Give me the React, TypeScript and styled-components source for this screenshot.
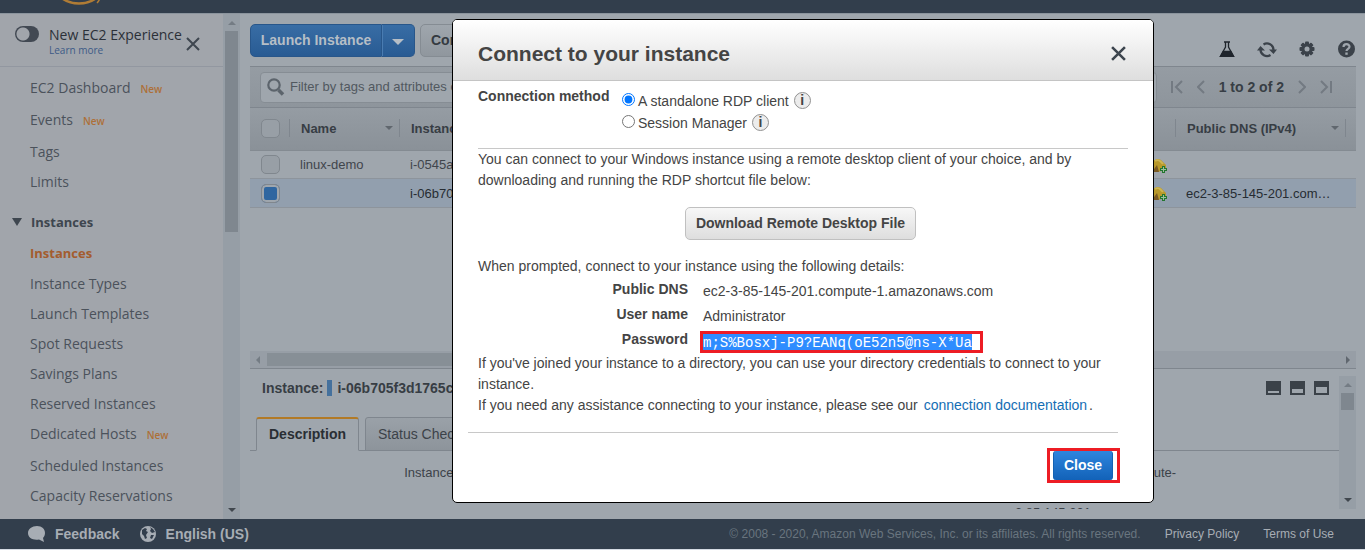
import React from 'react';
import styled, { createGlobalStyle } from 'styled-components';

const Global = createGlobalStyle`
  * { box-sizing: border-box; }
  body { margin: 0; background: #fff; overflow: hidden; font-family: "Liberation Sans", Arial, sans-serif; font-size: 14px; color: #444; }
  button, input { font-family: inherit; font-size: inherit; }
  h1, h2, p, ul, dl, dd, fieldset { margin: 0; padding: 0; border: 0; }
  a { text-decoration: none; color: inherit; }
`;

const Page = styled.div`
  min-height: 100vh;
  display: grid;
  grid-template-rows: 13px 1fr 30px 6px;
`;
const TopBar = styled.header`
  background: #323e4c;
  padding-left: 61px;
  overflow: hidden;
  svg { display: block; }
`;
const Middle = styled.div`
  display: flex;
  min-height: 0;
  border-top: 1px solid #8b949d;
`;

/* Side navigation */
const Side = styled.nav`
  flex: none;
  display: flex;
  width: 240px;
  background: #a1a5ab;
  font-family: "Open Sans", sans-serif;
`;
const SideBody = styled.div`
  flex: 1;
`;
const Experience = styled.div`
  display: flex;
  height: 53px;
  padding: 12px 23px 0 15px;
  border-bottom: 1px solid #9297a0;
`;
const Switch = styled.input`
  appearance: none;
  flex: none;
  width: 24px;
  height: 16px;
  margin: 0 10px 0 0;
  border-radius: 8px;
  background: radial-gradient(circle at 8px 8px, #a1a5ab 6px, #424953 7px);
`;
const ExperienceText = styled.div`
  flex: 1;
  display: flex;
  flex-direction: column;
  white-space: nowrap;
  label { font-size: 14px; line-height: 17px; color: #2b3038; }
  a { font-size: 10px; line-height: 15px; color: #3d5a87; }
`;
const IconButton = styled.button`
  display: flex;
  padding: 0;
  border: 0;
  background: none;
  color: #3e464f;
`;
const SideClose = styled(IconButton)`
  height: 14px;
  margin-top: 11px;
`;
const SideList = styled.ul`
  list-style: none;
  padding: ${(p: { $first?: boolean }) => (p.$first ? '5px 0 11px' : '0')};
`;
const SideItem = styled.li<{ $tagged?: boolean; $active?: boolean }>`
  display: flex;
  align-items: center;
  gap: 10px;
  height: ${(p) => (p.$tagged ? 32 : 30)}px;
  padding: 0 0 ${(p) => (p.$tagged ? 2 : 0)}px 30px;
  font-size: ${(p) => (p.$active ? 13 : 14)}px;
  font-weight: ${(p) => (p.$active ? 700 : 400)};
  color: ${(p) => (p.$active ? '#a35c2e' : '#4b525b')};
`;
const NewTag = styled.small`
  margin-top: 3px;
  font-size: 10px;
  font-weight: 600;
  color: #ad7039;
`;
const Group = styled.button`
  display: flex;
  align-items: center;
  gap: 9px;
  height: 31px;
  padding: 0 0 2px 12px;
  border: 0;
  background: none;
  font-size: 13px;
  font-weight: 700;
  color: #3e464f;
`;

/* Scroll bars */
const VTrack = styled.div<{ $thumb: number }>`
  flex: none;
  display: flex;
  flex-direction: column;
  align-items: center;
  justify-content: space-between;
  width: 17px;
  padding: 7px 0;
  background: #969ea6;
  &::before { content: ''; border: 4px solid transparent; border-top: 0; border-bottom-color: #747c84; }
  &::after { content: ''; border: 4px solid transparent; border-bottom: 0; border-top-color: #40474e; }
  i { width: 13px; height: ${(p) => p.$thumb}px; margin: 6px 0 auto; background: #7f878f; }
`;
const HTrack = styled.div`
  display: flex;
  align-items: center;
  justify-content: space-between;
  height: 18px;
  padding: 0 6px;
  background: #979ea6;
  border-bottom: 1px solid #7f868e;
  &::before { content: ''; border: 4px solid transparent; border-left: 0; border-right-color: #747c84; }
  &::after { content: ''; border: 4px solid transparent; border-right: 0; border-left-color: #60676f; }
  i { width: 72%; height: 13px; margin: 0 auto 0 7px; background: #878f96; }
`;

/* Main area */
const Main = styled.main`
  flex: 1;
  min-width: 0;
  display: flex;
  flex-direction: column;
  padding: 0 9px 10px 10px;
  background: #9fa6ad;
`;
const Toolbar = styled.div`
  display: flex;
  align-items: flex-start;
  gap: 5px;
  height: 52px;
  padding-top: 10px;
`;
const Split = styled.div`
  display: flex;
  button {
    height: 33px;
    border: 1px solid #28568a;
    background: linear-gradient(#386da5, #295b93);
    color: #b6bec6;
    font-weight: 700;
  }
  button:first-child { width: 132px; padding: 0 0 2px; border-radius: 5px 0 0 5px; }
  button:last-child { width: 33px; padding: 0; border-left: 0; border-radius: 0 5px 5px 0; box-shadow: inset 1px 0 #4a7cb1; }
`;
const Caret = styled.i`
  display: inline-block;
  border: 6px solid transparent;
  border-bottom: 0;
  border-top-color: #b6bec6;
  vertical-align: middle;
`;
const GreyButton = styled.button`
  height: 33px;
  padding: 0 10px 2px;
  border: 1px solid #858c93;
  border-radius: 5px;
  background: linear-gradient(#9fa6ad, #90979e);
  font-weight: 700;
  color: #343a41;
`;
const Tools = styled.div`
  display: flex;
  align-items: center;
  gap: 21px;
  margin-left: auto;
  padding-top: 15px;
  svg { display: block; }
`;
const FilterBar = styled.div`
  display: flex;
  align-items: center;
  height: 42px;
  padding: 0 24px 0 10px;
  background: linear-gradient(#959ca3, #8e959c);
  border: solid #7f868e;
  border-width: 1px 0;
`;
const Search = styled.label`
  flex: 1;
  display: flex;
  align-items: center;
  gap: 5px;
  height: 31px;
  padding: 0 0 1px 6px;
  border: 1px solid #868d94;
  border-radius: 4px;
  background: #9fa6ad;
  color: #5c646c;
  input { flex: 1; border: 0; padding: 0; background: none; outline: 0; font-size: 13px; }
  input::placeholder { color: #51585f; }
`;
const Pager = styled.div`
  display: flex;
  align-items: center;
  gap: 14px;
  padding-left: 14px;
  font-weight: 700;
  color: #373e45;
  button { color: #737a82; }
`;
const Grid = styled.table`
  width: 100%;
  table-layout: fixed;
  border-collapse: separate;
  border-spacing: 0;
  font-size: 13px;
  color: #3f454c;
  th { height: 43px; padding: 0 0 2px; text-align: left; background: linear-gradient(#959ca3, #8a9198); border-bottom: 1px solid #848b92; color: #373d44; }
  td { padding: 0 0 0 10px; white-space: nowrap; border-bottom: 1px solid #8d949c; }
  td:first-child { padding-left: 11px; }
  td svg { display: block; margin: 2px 9px 0 auto; }
`;
const Head = styled.div`
  display: flex;
  align-items: center;
  justify-content: space-between;
  height: 18px;
  padding: 0 6px 0 11px;
  border-right: 1px solid #7f868e;
`;
const SortCaret = styled.i`
  border: 4px solid transparent;
  border-bottom: 0;
  border-top-color: #60676e;
`;
const Row = styled.tr<{ $selected?: boolean }>`
  height: ${(p) => (p.$selected ? 29 : 28)}px;
  background: ${(p) => (p.$selected ? '#929fae' : 'transparent')};
  color: ${(p) => (p.$selected ? '#262c32' : '#3f454c')};
`;
const Tick = styled.input`
  appearance: none;
  display: block;
  width: 19px;
  height: 19px;
  margin: 0;
  border: 1px solid #80878e;
  border-radius: 5px;
  background: #989fa6;
  &:checked { background: #2f66a0; box-shadow: inset 0 0 0 2px #9fa6ad; }
`;
const Spacer = styled.div`
  flex: 1;
`;

/* Detail pane */
const Detail = styled.section`
  display: flex;
  height: 133px;
  margin-top: 7px;
  overflow: hidden;
`;
const DetailBody = styled.div`
  flex: 1;
  min-width: 0;
`;
const DetailHead = styled.div`
  display: flex;
  align-items: center;
  height: 24px;
  padding: 0 10px 0 12px;
  font-weight: 700;
  color: #373d44;
`;
const Marker = styled.i`
  width: 5px;
  height: 16px;
  margin: 0 5px 0 4px;
  background: #45719d;
`;
const PaneButtons = styled.div`
  display: flex;
  gap: 9px;
  margin-left: auto;
`;
const PaneButton = styled.button<{ $fill: number }>`
  width: 15px;
  height: 14px;
  padding: 0;
  border: 2px solid #3b4249;
  border-top-width: ${(p) => p.$fill}px;
  background: #9fa6ad;
`;
const Tabs = styled.div`
  display: flex;
  gap: 6px;
  height: 34px;
  margin-top: 17px;
  padding-left: 6px;
  box-shadow: inset 0 -1px #7f868e;
`;
const Tab = styled.button<{ $active?: boolean }>`
  padding: 0 12px 1px;
  border: 1px solid #7f868e;
  border-radius: 3px 3px 0 0;
  border-top: ${(p) => (p.$active ? '2px solid #b27a26' : '1px solid #7f868e')};
  border-bottom-color: ${(p) => (p.$active ? '#9fa6ad' : '#7f868e')};
  background: ${(p) => (p.$active ? '#9fa6ad' : 'linear-gradient(#9aa1a8, #8d949b)')};
  font-weight: ${(p) => (p.$active ? 700 : 400)};
  color: ${(p) => (p.$active ? '#292e34' : '#3c4249')};
`;
const Facts = styled.dl`
  display: grid;
  grid-template-columns: 220px 1fr 157px 324px;
  row-gap: 6px;
  padding-top: 13px;
  font-size: 13px;
  line-height: 17px;
  color: #3c4249;
  dt { text-align: right; white-space: nowrap; padding-right: 16px; }
  dt:first-child { padding-right: 0; }
`;

/* Footer */
const Footer = styled.footer`
  display: flex;
  align-items: center;
  padding: 0 31px 0 28px;
  background: #323e4c;
  font-size: 12px;
  color: #69757f;
  a { margin-left: 24px; color: #a7adb4; }
  p { margin-left: auto; }
`;
const FooterButton = styled.button`
  display: flex;
  align-items: center;
  gap: 9px;
  margin-right: 20px;
  padding: 0;
  border: 0;
  background: none;
  font-size: 14px;
  font-weight: 700;
  color: #a7adb4;
`;
const Edge = styled.div`
  border-top: 1px solid #d5dbe3;
`;

/* Dialog */
const Dialog = styled.section`
  position: fixed;
  top: 19px;
  left: 452px;
  width: 702px;
  max-width: calc(100vw - 40px);
  border: 1px solid #000;
  border-radius: 5px;
  background: #fff;
  overflow: hidden;
  line-height: 21px;
`;
const DialogHead = styled.header`
  display: flex;
  align-items: center;
  justify-content: space-between;
  height: 61px;
  padding: 7px 27px 0 25px;
  border-bottom: 1px solid #c4c4c4;
  background: linear-gradient(#fff, #dedede);
  h1 { font-size: 21px; }
`;
const DialogBody = styled.div`
  padding: 5px 25px 0;
`;
const Method = styled.fieldset`
  display: grid;
  grid-template-columns: 143px 1fr;
  height: 63px;
  border-bottom: 1px solid #c8c8c8;
`;
const Options = styled.div`
  display: flex;
  flex-direction: column;
  padding-top: 3px;
`;
const Option = styled.div`
  display: flex;
  align-items: center;
  height: 22px;
  input { width: 13px; height: 13px; margin: 0 3px 2px 1px; }
  label { padding-top: 3px; }
`;
const Info = styled.button`
  width: 17px;
  height: 17px;
  margin-left: 5px;
  padding: 0;
  border: 1px solid #919191;
  border-radius: 50%;
  background: #ececec;
  line-height: 14px;
  font-weight: 700;
  color: #444;
`;
const ButtonRow = styled.div`
  display: flex;
  justify-content: center;
  padding: 16px 5px 16px 0;
`;
const Download = styled.button`
  height: 33px;
  padding: 0 10px 2px;
  border: 1px solid #c0c0c0;
  border-radius: 5px;
  background: linear-gradient(#f7f7f7, #dedede);
  font-weight: 700;
  color: #444;
`;
const Credentials = styled.dl`
  display: grid;
  grid-template-columns: 210px 1fr;
  grid-auto-rows: 25px;
  column-gap: 15px;
  height: 76px;
  padding-top: 2px;
  dt { text-align: right; font-weight: 700; }
  dd { padding-top: 2px; }
`;
const Password = styled.dd`
  && { padding: 0; }
  height: 22px;
  justify-self: start;
  margin: 2px 0 0 -3px;
  border: 3px solid #ed1c24;
  code {
    display: block;
    height: 16px;
    margin-right: 8px;
    background: #2e8cff;
    color: #fff;
    font: 14px/18px "Liberation Mono", monospace;
  }
`;
const DocLink = styled.a`
  margin: 0 2px;
  color: #146eb4;
`;
const Actions = styled.div`
  display: flex;
  justify-content: flex-end;
  margin: 16px 10px 19px -10px;
  padding-top: 15px;
  border-top: 1px solid #c8c8c8;
`;
const Highlight = styled.div`
  height: 35px;
  margin-right: -2px;
  padding: 0 4px 0 3px;
  border: 3px solid #ed1c24;
`;
const CloseButton = styled.button`
  width: 60px;
  height: 29px;
  padding: 0 0 2px;
  border: 1px solid #1362b3;
  border-width: 0 1px;
  border-radius: 3px;
  background: linear-gradient(#2e85de, #1262b8);
  font-weight: 700;
  color: #fff;
`;

const Cross = ({ size, width }: { size: number; width: number }) => (
  <svg width={size} height={size} viewBox="0 0 14 14" stroke="currentColor" strokeWidth={width} fill="none">
    <path d="M1 1L13 13M13 1L1 13" />
  </svg>
);

const Alarm = () => (
  <svg width="17" height="16" viewBox="0 0 17 16">
    <path d="M2 5C5 0 10 0 13 4L16 7V12L7 14L3 13Z" fill="#b9992a" />
    <path d="M2 14L7 7L9 14Z" fill="#7a5a24" />
    <path d="M5 3C8 1 10 2 13 6" stroke="#cdb552" strokeWidth="2" fill="none" />
    <path d="M12 8h3v2h2v3h-2v2h-3v-2H10v-3h2Z" fill="#23752f" />
    <path d="M13.500 9v5M11 11.500h5" stroke="#9cc09d" />
  </svg>
);

const PagerIcon = ({ d, w }: { d: string; w: number }) => (
  <svg width={w} height="14" viewBox={`0 0 ${w} 14`} fill="none" stroke="currentColor" strokeWidth="2">
    <path d={d} />
  </svg>
);

const services = [
  { name: 'EC2 Dashboard', tagged: true },
  { name: 'Events', tagged: true },
  { name: 'Tags' },
  { name: 'Limits' },
];
const instanceLinks = [
  { name: 'Instances', active: true },
  { name: 'Instance Types' },
  { name: 'Launch Templates' },
  { name: 'Spot Requests' },
  { name: 'Savings Plans' },
  { name: 'Reserved Instances' },
  { name: 'Dedicated Hosts', tagged: true },
  { name: 'Scheduled Instances' },
  { name: 'Capacity Reservations' },
];

type Link = { name: string; tagged?: boolean; active?: boolean };
const Links = ({ items, first }: { items: Link[]; first?: boolean }) => (
  <SideList $first={first}>
    {items.map((l) => (
      <SideItem key={l.name} $tagged={l.tagged} $active={l.active}>
        <a href="#">{l.name}</a>
        {l.tagged && <NewTag>New</NewTag>}
      </SideItem>
    ))}
  </SideList>
);

export default function App() {
  return (
    <Page>
      <Global />
      <TopBar>
        <svg width="44" height="8" viewBox="0 0 44 8" fill="none" stroke="#b07c35" strokeWidth="2.500">
          <path d="M2 -1C11 5 25 5 34 -1" />
          <path d="M36 3Q38 1 39 -2" strokeWidth="1.500" />
        </svg>
      </TopBar>
      <Middle>
        <Side>
          <SideBody>
            <Experience>
              <Switch type="checkbox" role="switch" id="experience" />
              <ExperienceText>
                <label htmlFor="experience">New EC2 Experience</label>
                <a href="#">Learn more</a>
              </ExperienceText>
              <SideClose aria-label="Close"><Cross size={14} width={2} /></SideClose>
            </Experience>
            <Links items={services} first />
            <Group>
              <svg width="10" height="8" viewBox="0 0 10 8"><path d="M0 0H10L5 8Z" fill="currentColor" /></svg>
              Instances
            </Group>
            <Links items={instanceLinks} />
          </SideBody>
          <VTrack $thumb={201}><i /></VTrack>
        </Side>
        <Main>
          <Toolbar>
            <Split>
              <button>Launch Instance</button>
              <button aria-label="Launch options"><Caret /></button>
            </Split>
            <GreyButton>Connect</GreyButton>
            <Tools>
              <IconButton aria-label="Experiments">
                <svg width="16" height="18" viewBox="0 -1 16 18" fill="none" stroke="#1f252c" strokeWidth="1.300">
                  <path d="M5 1h6M6.500 1v5L1.500 15.300h13L9.500 6V1" />
                  <path d="M4.200 10.500h7.600l2.700 4.800h-13Z" fill="#1f252c" />
                </svg>
              </IconButton>
              <IconButton aria-label="Refresh">
                <svg width="22" height="20" viewBox="0 -2 22 20" fill="none" stroke="#3b424a" strokeWidth="2.200">
                  <path d="M4.500 8.500A6.500 6.500 0 0 0 14.500 14M17.500 9A6.500 6.500 0 0 0 7.500 3.500" />
                  <path d="M1 9.500L4.500 5L9 9.500ZM13 8.500H21L17.500 13Z" fill="#3b424a" stroke="none" />
                </svg>
              </IconButton>
              <IconButton aria-label="Settings">
                <svg width="16" height="18" viewBox="-8 -9 16 18">
                  <g fill="#3b424a">
                    {[0, 45, 90, 135].map((a) => (
                      <rect key={a} x="-2" y="-7.500" width="4" height="15" rx="1" transform={`rotate(${a})`} />
                    ))}
                    <circle r="5.500" />
                  </g>
                  <circle r="2.500" fill="#9fa6ad" />
                </svg>
              </IconButton>
              <IconButton aria-label="Help">
                <svg width="20" height="18" viewBox="0 0 20 18">
                  <circle cx="10.500" cy="9" r="8.500" fill="#3b424a" />
                  <path d="M7.500 7C7.500 3.200 13.500 3.200 13.500 6.800C13.500 9 10.500 8.800 10.500 11" stroke="#9fa6ad" strokeWidth="2.200" fill="none" />
                  <path d="M10.500 12.500v2.300" stroke="#9fa6ad" strokeWidth="2.400" />
                </svg>
              </IconButton>
            </Tools>
          </Toolbar>
          <FilterBar>
            <Search>
              <svg width="18" height="18" viewBox="0 0 18 18" fill="none" stroke="currentColor">
                <circle cx="7" cy="7" r="5.700" strokeWidth="2.200" />
                <path d="M11.500 12L16 16.500" strokeWidth="3.500" />
              </svg>
              <input aria-label="Filter" placeholder="Filter by tags and attributes or search by keyword" />
            </Search>
            <Pager>
              <IconButton aria-label="First page"><PagerIcon w={12} d="M1 1V13M11 1L5 7L11 13" /></IconButton>
              <IconButton aria-label="Previous page"><PagerIcon w={8} d="M7 1L1 7L7 13" /></IconButton>
              <span>1 to 2 of 2</span>
              <IconButton aria-label="Next page"><PagerIcon w={8} d="M1 1L7 7L1 13" /></IconButton>
              <IconButton aria-label="Last page"><PagerIcon w={12} d="M1 1L7 7L1 13M11 1V13" /></IconButton>
            </Pager>
          </FilterBar>
          <Grid>
            <colgroup>
              <col style={{ width: 40 }} />
              <col style={{ width: 110 }} />
              <col />
              <col />
              <col style={{ width: 170 }} />
              <col style={{ width: 10 }} />
            </colgroup>
            <thead>
              <tr>
                <th><Head><Tick type="checkbox" aria-label="Select all" /></Head></th>
                <th><Head>Name<SortCaret /></Head></th>
                <th><Head>Instance ID</Head></th>
                <th><Head /></th>
                <th><Head>Public DNS (IPv4)<SortCaret /></Head></th>
                <th />
              </tr>
            </thead>
            <tbody>
              <Row>
                <td><Tick type="checkbox" aria-label="Select linux-demo" /></td>
                <td>linux-demo</td>
                <td>i-0545a</td>
                <td><Alarm /></td>
                <td />
                <td />
              </Row>
              <Row $selected>
                <td><Tick type="checkbox" defaultChecked aria-label="Select i-06b705f3d1765c" /></td>
                <td />
                <td>i-06b705f3d1765c</td>
                <td><Alarm /></td>
                <td>ec2-3-85-145-201.com…</td>
                <td />
              </Row>
            </tbody>
          </Grid>
          <Spacer />
          <HTrack><i /></HTrack>
          <Detail>
            <DetailBody>
              <DetailHead>
                Instance:<Marker />i-06b705f3d1765c
                <PaneButtons>
                  <PaneButton $fill={10} aria-label="Small pane" />
                  <PaneButton $fill={8} aria-label="Medium pane" />
                  <PaneButton $fill={6} aria-label="Large pane" />
                </PaneButtons>
              </DetailHead>
              <Tabs>
                <Tab $active>Description</Tab>
                <Tab>Status Checks</Tab>
              </Tabs>
              <Facts>
                <dt>Instance ID</dt>
                <dd />
                <dt>Public DNS (IPv4)</dt>
                <dd>ec2-3-85-145-201.compute-<br />1.amazonaws.com</dd>
                <dt />
                <dd />
                <dt />
                <dd>3.85.145.201</dd>
              </Facts>
            </DetailBody>
            <VTrack $thumb={17}><i /></VTrack>
          </Detail>
        </Main>
      </Middle>
      <Footer>
        <FooterButton>
          <svg width="18" height="16" viewBox="0 0 18 16"><path d="M9 0C14 0 17 3 17 7C17 9 16 11 15 12L16 16L11 13.500C5 14.500 0 12 0 7C0 3 4 0 9 0Z" fill="currentColor" /></svg>
          Feedback
        </FooterButton>
        <FooterButton>
          <svg width="17" height="16" viewBox="0 0 17 16">
            <circle cx="8" cy="8" r="8" fill="currentColor" />
            <path d="M2 4L5 2L7 3L6 5L8 6L6 9L7 12L5 13L4 10L2 8ZM10 1L13 3L15 6L12 7L10 5L11 3ZM11 9L14 9L12 13L10 12Z" fill="#323e4c" />
          </svg>
          English (US)
        </FooterButton>
        <p>© 2008 - 2020, Amazon Web Services, Inc. or its affiliates. All rights reserved.</p>
        <a href="#">Privacy Policy</a>
        <a href="#">Terms of Use</a>
      </Footer>
      <Edge />

      <Dialog role="dialog" aria-labelledby="dialog-title">
        <DialogHead>
          <h1 id="dialog-title">Connect to your instance</h1>
          <IconButton aria-label="Close dialog"><Cross size={15} width={2.4} /></IconButton>
        </DialogHead>
        <DialogBody>
          <Method>
            <strong>Connection method</strong>
            <Options>
              <Option>
                <input type="radio" name="method" id="rdp" defaultChecked />
                <label htmlFor="rdp">A standalone RDP client</label>
                <Info aria-label="About RDP">i</Info>
              </Option>
              <Option>
                <input type="radio" name="method" id="session" />
                <label htmlFor="session">Session Manager</label>
                <Info aria-label="About Session Manager">i</Info>
              </Option>
            </Options>
          </Method>
          <p>You can connect to your Windows instance using a remote desktop client of your choice, and by downloading and running the RDP shortcut file below:</p>
          <ButtonRow><Download>Download Remote Desktop File</Download></ButtonRow>
          <p>When prompted, connect to your instance using the following details:</p>
          <Credentials>
            <dt>Public DNS</dt>
            <dd>ec2-3-85-145-201.compute-1.amazonaws.com</dd>
            <dt>User name</dt>
            <dd>Administrator</dd>
            <dt>Password</dt>
            <Password><code>m;S%Bosxj-P9?EANq(oE52n5@ns-X*Ua</code></Password>
          </Credentials>
          <p>If you've joined your instance to a directory, you can use your directory credentials to connect to your instance.</p>
          <p>If you need any assistance connecting to your instance, please see our <DocLink href="#">connection documentation</DocLink>.</p>
          <Actions>
            <Highlight><CloseButton>Close</CloseButton></Highlight>
          </Actions>
        </DialogBody>
      </Dialog>
    </Page>
  );
}
